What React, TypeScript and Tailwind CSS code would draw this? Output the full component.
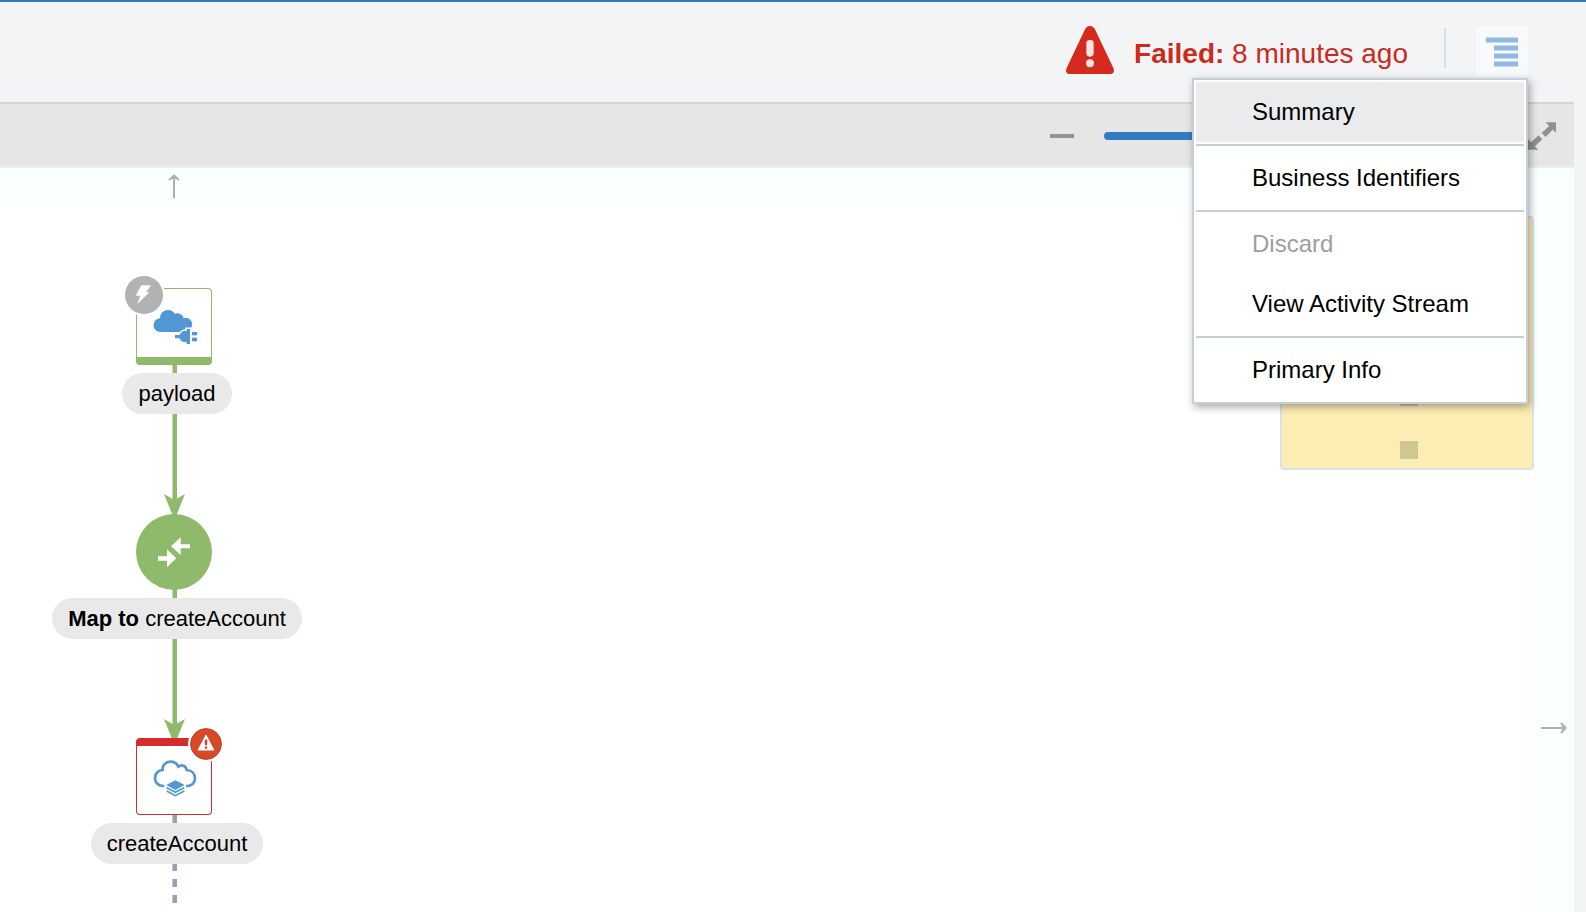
import React from "react";

function WarningTriangle() {
  return (
    <svg className="mb-1 h-12 w-12 shrink-0" viewBox="0 0 144 144" role="img" aria-label="Error">
      <path
        fill="#d52b1e"
        d="M72 0c7 0 12 4 16 12l53 112c6 12 2 20-7 20H10c-9 0-13-8-7-20L56 12c4-8 9-12 16-12z"
      />
      <rect x="61" y="42" width="22" height="50" rx="10" fill="#f6e4e2" />
      <circle cx="72" cy="112" r="12" fill="#f6e4e2" />
    </svg>
  );
}

function MenuBars() {
  return (
    <svg className="h-7 w-8 overflow-visible" viewBox="0 0 32 28" fill="#8fb9e4" aria-hidden="true">
      <rect x="0" y="-0.5" width="32" height="5" />
      <rect x="8" y="7.5" width="24" height="5" />
      <rect x="8" y="15.5" width="24" height="5" />
      <rect x="8" y="23.5" width="24" height="5" />
    </svg>
  );
}

function ExpandIcon() {
  return (
    <svg className="h-7 w-7" viewBox="0 0 86 84" fill="#8d9192" aria-hidden="true">
      <path d="M54 0H86V32L76 23L54 45L42 33L65 11Z" />
      <path d="M32 84H0V52L10 61L32 40L44 52L21 74Z" />
    </svg>
  );
}

function CloudPlug() {
  return (
    <svg className="ml-0.5 h-9 w-[45px] shrink-0" viewBox="339 147 135 108" fill="#5097d3" aria-hidden="true">
      <circle cx="361" cy="195.5" r="20.5" />
      <circle cx="384" cy="174" r="24" />
      <circle cx="412" cy="179" r="19.5" />
      <circle cx="437" cy="193" r="19.5" />
      <rect x="361" y="178" width="74" height="38" />
      <path
        stroke="#fff"
        strokeWidth="9"
        d="M405 225H419C421 216 428 212 440 212V207H450V252H440V247C428 247 421 243 419 235H405Z"
      />
      <rect x="451" y="208" width="24" height="46" fill="#fff" />
      <path d="M405 225H419C421 216 428 212 440 212V207H450V252H440V247C428 247 421 243 419 235H405Z" />
      <rect x="456" y="216" width="15" height="10" />
      <rect x="456" y="233" width="15" height="11" />
    </svg>
  );
}

function CloudLayers() {
  return (
    <svg className="ml-0.5 h-10 w-[45px] shrink-0" viewBox="339 171 135 120" fill="none" stroke="#5097d3" aria-hidden="true">
      <path
        strokeWidth="8"
        d="M373 255C354 256 345 244 345 231C345 217 355 207 368 207C366 192 378 182 391 182C402 182 411 188 415 197C426 189 438 195 440 207C456 208 465 219 465 232C465 246 455 256 438 255"
      />
      <path fill="#5097d3" stroke="none" d="M406 238L434 252L406 267L379 252Z" />
      <path strokeWidth="5" d="M380 260L406 274L433 260M380 270L406 284L433 270" />
    </svg>
  );
}

function BoltBadge() {
  return (
    <svg className="absolute -left-3.5 -top-[15px] h-[42px] w-[42px]" viewBox="-6 -6 126 126" aria-hidden="true">
      <circle cx="57" cy="57" r="63" fill="#fff" />
      <circle cx="57" cy="57" r="57" fill="#b1b2b4" />
      <path fill="#fff" d="M49 28H78L64 49H73L37 84L46 59H32Z" />
    </svg>
  );
}

function ErrorBadge() {
  return (
    <svg className="absolute -right-[13px] -top-5 h-9 w-9" viewBox="-6 -6 110 110" aria-hidden="true">
      <circle cx="49" cy="49" r="55" fill="#fff" />
      <circle cx="49" cy="49" r="47" fill="#d84a25" stroke="#bd4023" strokeWidth="3" />
      <path fill="#fff" stroke="#fff" strokeWidth="4" strokeLinejoin="round" d="M49 23L72 67H26Z" />
      <rect x="45" y="35" width="8" height="18" rx="3" fill="#d84a25" />
      <circle cx="49" cy="60" r="4" fill="#d84a25" />
    </svg>
  );
}

function MapNode() {
  return (
    <svg className="h-[76px] w-[76px]" viewBox="0 0 228 228" role="img" aria-label="Map">
      <circle cx="114" cy="114" r="114" fill="#8fba6c" />
      <path fill="#fff" d="M105 97L134 70V91H162V103H134V123Z" />
      <path fill="#fff" d="M66 127H93V106L121 133L93 160V140H66Z" />
    </svg>
  );
}

function Connectors() {
  return (
    <svg className="absolute left-[163px] top-[197px] h-[547px] w-6" viewBox="0 0 24 547" aria-hidden="true">
      <g fill="#8fba6c">
        <rect x="9.5" y="0" width="4.5" height="146" />
        <path d="M1 129L11.5 135L22 129L13.5 150H9.5Z" />
        <rect x="9.5" y="222" width="4.5" height="150" />
        <path d="M1 354L11.5 360L22 354L13.5 375H9.5Z" />
      </g>
      <path d="M11.7 450V540" stroke="#95a1ae" strokeWidth="4.5" strokeDasharray="8 8" />
    </svg>
  );
}

function Pill({ children }: { children: React.ReactNode }) {
  return (
    <span className="ml-1.5 whitespace-nowrap rounded-full bg-[#e9e9e9] px-4 py-1 text-[22px] leading-[33px]">
      {children}
    </span>
  );
}

function Step({ className, node, children }: { className: string; node: React.ReactNode; children: React.ReactNode }) {
  return (
    <li className={`absolute left-0 flex w-[348px] flex-col items-center gap-2 ${className}`}>
      {node}
      <Pill>{children}</Pill>
    </li>
  );
}

const groups = [
  [{ label: "Summary", active: true }],
  [{ label: "Business Identifiers" }],
  [{ label: "Discard", disabled: true }, { label: "View Activity Stream" }],
  [{ label: "Primary Info" }],
] as { label: string; active?: boolean; disabled?: boolean }[][];

function ActionsMenu() {
  return (
    <div
      role="menu"
      aria-label="Actions"
      className="absolute right-0 top-full z-10 w-84 divide-y-2 divide-[#c4cfd9] border-2 border-[#c4cfd9] bg-white px-0.5 shadow-[2px_3px_8px_rgba(0,0,0,0.35)]"
    >
      {groups.map((items, index) => (
        <div key={index} role="group" className="py-0.5">
          {items.map((item) => (
            <button
              key={item.label}
              type="button"
              role="menuitem"
              disabled={item.disabled}
              className={`block w-full whitespace-nowrap pl-14 text-left text-2xl/[60px] ${
                item.active ? "bg-[#eaebed]" : "bg-white"
              } ${item.disabled ? "text-[#9e9e9e]" : "text-black"}`}
            >
              {item.label}
            </button>
          ))}
        </div>
      ))}
    </div>
  );
}

export default function App() {
  return (
    <div className="flex min-h-screen flex-col bg-[#f2f4f6] font-['Liberation_Sans',Arial,sans-serif] text-black">
      <header className="flex items-center justify-end border-t-2 border-[#327bc0] py-6 pr-[58px]">
        <WarningTriangle />
        <p className="ml-5 whitespace-nowrap pt-1 text-[28px] leading-9 text-[#cb2a1d]">
          <strong>Failed:</strong> 8 minutes ago
        </p>
        <div className="mb-2 ml-9 h-10 w-0.5 bg-[#d5dee5]" />
        <div className="relative ml-[30px]">
          <button
            type="button"
            aria-label="Actions menu"
            aria-haspopup="menu"
            aria-expanded="true"
            className="flex h-13 w-13 items-start justify-center rounded-t bg-[#f7f9fb] pt-3"
          >
            <MenuBars />
          </button>
          <ActionsMenu />
        </div>
      </header>

      <main className="mr-3 flex flex-1 flex-col">
        <div className="flex h-[66px] items-center justify-end border-y-2 border-t-[#d5d8c6] border-b-[#ebefef] bg-[#e6e6e6] pr-[18px] pt-0.5">
          <button type="button" aria-label="Zoom out" className="flex h-8 w-6 items-center">
            <span className="h-1 w-full bg-[#929597]" />
          </button>
          <input
            type="range"
            aria-label="Zoom level"
            defaultValue={60}
            className="mx-[30px] h-2 w-[346px] appearance-none rounded-full bg-[#327bc0]"
          />
          <button type="button" aria-label="Zoom in" className="mr-6 flex h-8 w-6 items-center justify-center text-2xl text-[#929597]">
            +
          </button>
          <button type="button" aria-label="Fit to screen">
            <ExpandIcon />
          </button>
        </div>

        <section aria-label="Integration flow" className="relative flex min-h-[744px] flex-1 flex-col bg-[#faffff]">
          <button type="button" aria-label="Scroll up" className="flex h-[38px] w-[348px] items-start justify-center pt-[5px]">
            <svg className="h-[26px] w-3" viewBox="0 0 12 26" fill="none" stroke="#adb0af" strokeWidth="2" aria-hidden="true">
              <path d="M6 3V25M1 7L6 2.5L11 7" />
              <path d="M3 6L6 3L9 6Z" fill="#adb0af" stroke="none" />
            </svg>
          </button>
          <div className="flex flex-1">
            <div className="flex-1 bg-white" />
            <div className="flex w-10 items-start justify-center pt-[516px]">
              <button type="button" aria-label="Scroll right">
                <svg className="h-3 w-[27px]" viewBox="0 0 27 12" fill="none" stroke="#adb0af" strokeWidth="2" aria-hidden="true">
                  <path d="M0 6H25M20 1L24.500 6L20 11" />
                  <path d="M21 3L24 6L21 9Z" fill="#adb0af" stroke="none" />
                </svg>
              </button>
            </div>
          </div>

          <Connectors />
          <ol>
            <Step
              className="top-[120px]"
              node={
                <div className="relative flex h-[77px] w-[76px] justify-center rounded border border-b-8 border-[#8fba6c] bg-white pt-5">
                  <CloudPlug />
                  <BoltBadge />
                </div>
              }
            >
              payload
            </Step>
            <Step className="top-[346px]" node={<MapNode />}>
              <strong>Map to</strong> createAccount
            </Step>
            <Step
              className="top-[570px]"
              node={
                <div className="relative flex h-[77px] w-[76px] justify-center rounded border border-t-8 border-[#d52b2b] bg-white pt-3">
                  <CloudLayers />
                  <ErrorBadge />
                </div>
              }
            >
              createAccount
            </Step>
          </ol>

          <div
            aria-label="Overview"
            className="absolute right-10 top-12 flex h-[254px] w-[254px] flex-col items-center justify-end gap-[35px] rounded border-2 border-[#dce1e6] bg-[#fdedb5] pb-[9px] pl-1"
          >
            <span className="h-[18px] w-[18px] bg-[#cec793]" />
            <span className="h-[18px] w-[18px] bg-[#cec793]" />
            <span className="h-[18px] w-[18px] bg-[#cec793]" />
          </div>
        </section>
      </main>
    </div>
  );
}
